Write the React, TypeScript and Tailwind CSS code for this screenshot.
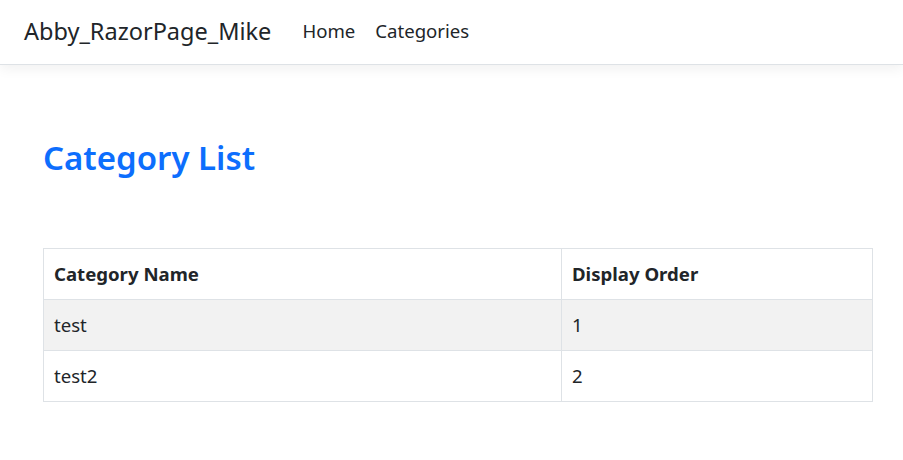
import React from "react";

const categories = [
    { id: 1, name: "test", displayOrder: 1 },
    { id: 2, name: "test2", displayOrder: 2 },
];

const App: React.FC = () => {
    return (
        <div className="min-h-screen bg-white text-[#212529]" style={{ fontFamily: '"Noto Sans", sans-serif' }}>
            <nav className="h-[65px] border-b border-[#dee2e6] shadow-[0_4px_12px_rgba(0,0,0,0.06)] flex items-center px-6 pb-[3px]">
                <a className="text-[23.5px] leading-[30px] text-[#212529] mr-[31px]">Abby_RazorPage_Mike</a>
                <a className="text-[18.6px] leading-6 text-[#212529] mr-[20px]">Home</a>
                <a className="text-[18.6px] leading-6 text-[#212529]">Categories</a>
            </nav>

            <main className="pl-[43px] pr-[31px]">
                <h1 className="text-[33px] font-semibold text-[#0d6efd] leading-[42px] mt-[72px]">Category List</h1>

                <table className="w-[830px] mt-[69px] border border-[#dee2e6] border-collapse text-[18.6px]">
                    <thead>
                        <tr>
                            <th className="w-[518px] border border-[#dee2e6] text-left font-bold px-[10px] h-[51px]">Category Name</th>
                            <th className="border border-[#dee2e6] text-left font-bold px-[10px] h-[51px]">Display Order</th>
                        </tr>
                    </thead>
                    <tbody>
                        {categories.map((c, i) => (
                            <tr key={c.id} className={i % 2 === 0 ? "bg-[#f2f2f2]" : "bg-white"}>
                                <td className="border border-[#dee2e6] px-[10px] h-[51px]">{c.name}</td>
                                <td className="border border-[#dee2e6] px-[10px] h-[51px]">{c.displayOrder}</td>
                            </tr>
                        ))}
                    </tbody>
                </table>
            </main>
        </div>
    );
};

export default App;
